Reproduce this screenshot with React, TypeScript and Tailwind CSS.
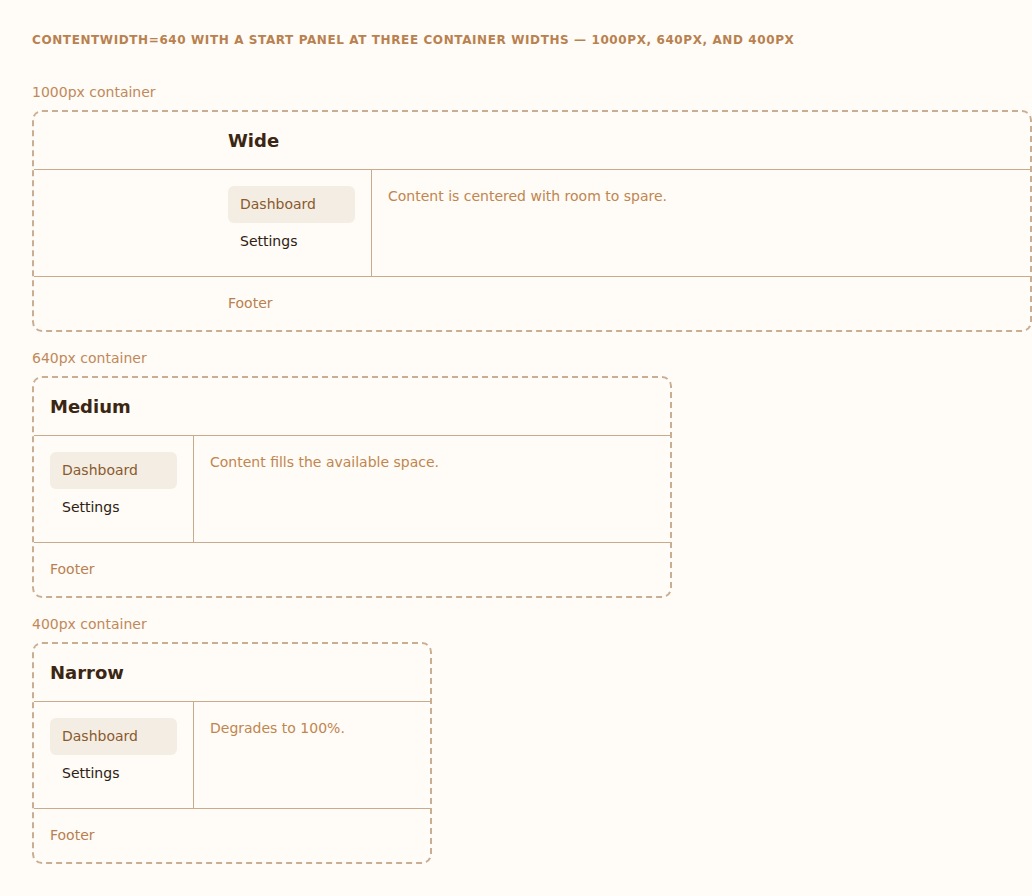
import React from "react";

type Demo = {
  label: string;
  width: number;
  title: string;
  body: string;
};

const demos: Demo[] = [
  { label: "1000px container", width: 1000, title: "Wide", body: "Content is centered with room to spare." },
  { label: "640px container", width: 640, title: "Medium", body: "Content fills the available space." },
  { label: "400px container", width: 400, title: "Narrow", body: "Degrades to 100%." },
];

function Shell({ demo }: { demo: Demo }) {
  return (
    <div
      className="rounded-[10px] border-2 border-dashed border-[#c9ae94] overflow-hidden"
      style={{ width: demo.width }}
    >
      {/* header */}
      <div className="border-b border-[#c6ab8d]">
        <div className="mx-auto w-full max-w-[640px] p-4">
          <h2 className="text-[18px] leading-[25px] font-bold text-[#3b2613]">{demo.title}</h2>
        </div>
      </div>
      {/* body: start panel + main */}
      <div className="border-b border-[#c6ab8d]">
        <div className="mx-auto flex w-full max-w-[640px]">
          <nav className="w-40 shrink-0 border-r border-[#c6ab8d] p-4 flex flex-col">
            <div className="rounded-md bg-[#f4ede3] px-3 py-2 text-sm leading-[21px] text-[#8a5a2e]">
              Dashboard
            </div>
            <div className="px-3 py-2 text-sm leading-[21px] text-[#2e2013]">Settings</div>
          </nav>
          <main className="flex-1 p-4 text-sm leading-[21px] text-[#c0864f]">{demo.body}</main>
        </div>
      </div>
      {/* footer */}
      <div>
        <div className="mx-auto w-full max-w-[640px] p-4 text-sm leading-[21px] text-[#b8804f]">Footer</div>
      </div>
    </div>
  );
}

export default function App() {
  return (
    <div
      className="min-h-screen bg-[#fffbf6] px-8 pt-8 pb-8"
      style={{ fontFamily: '"DejaVu Sans", sans-serif' }}
    >
      <h1 className="text-[12px] leading-4 font-bold uppercase tracking-[0.05em] text-[#b8814f] mb-[34px]">
        contentWidth=640 with a start panel at three container widths — 1000px, 640px, and 400px
      </h1>
      <div className="flex flex-col gap-4">
        {demos.map((d) => (
          <section key={d.label}>
            <div className="text-sm leading-[21px] text-[#c0895a] mb-[7px]">{d.label}</div>
            <Shell demo={d} />
          </section>
        ))}
      </div>
    </div>
  );
}
